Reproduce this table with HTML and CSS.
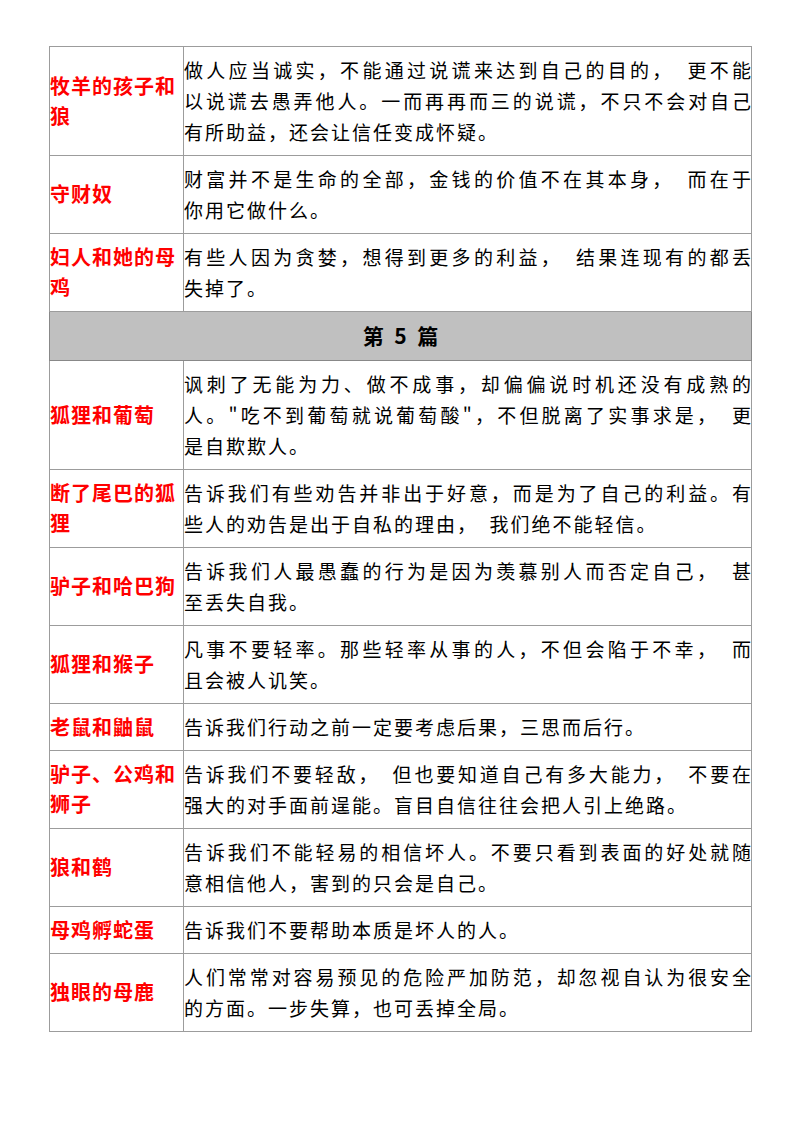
FILE: index.html
```html
<!DOCTYPE html>
<html lang="zh-CN">
<head>
<meta charset="utf-8">
<title>寓言启示</title>
<link rel="stylesheet" href="styles.css">
</head>
<body>
<table class="fables">
  <colgroup><col class="c-name"><col class="c-text"></colgroup>
  <tbody>
    <tr>
      <td class="name">牧羊的孩子和狼</td>
      <td class="text"><span class="ln">做人应当诚实，不能通过说谎来达到自己的目的，&ensp;更不能</span><span class="ln">以说谎去愚弄他人。一而再再而三的说谎，不只不会对自己</span><span class="ln end">有所助益，还会让信任变成怀疑。</span></td>
    </tr>
    <tr>
      <td class="name">守财奴</td>
      <td class="text"><span class="ln">财富并不是生命的全部，金钱的价值不在其本身，&ensp;而在于</span><span class="ln end">你用它做什么。</span></td>
    </tr>
    <tr>
      <td class="name">妇人和她的母鸡</td>
      <td class="text"><span class="ln">有些人因为贪婪，想得到更多的利益，&ensp;结果连现有的都丢</span><span class="ln end">失掉了。</span></td>
    </tr>
    <tr class="section">
      <td colspan="2">第&ensp;5&ensp;篇</td>
    </tr>
    <tr>
      <td class="name">狐狸和葡萄</td>
      <td class="text"><span class="ln">讽刺了无能为力、做不成事，却偏偏说时机还没有成熟的</span><span class="ln">人。"吃不到葡萄就说葡萄酸"，不但脱离了实事求是，&ensp;更</span><span class="ln end">是自欺欺人。</span></td>
    </tr>
    <tr>
      <td class="name">断了尾巴的狐狸</td>
      <td class="text"><span class="ln">告诉我们有些劝告并非出于好意，而是为了自己的利益。有</span><span class="ln end">些人的劝告是出于自私的理由，&ensp;我们绝不能轻信。</span></td>
    </tr>
    <tr>
      <td class="name">驴子和哈巴狗</td>
      <td class="text"><span class="ln">告诉我们人最愚蠢的行为是因为羡慕别人而否定自己，&ensp;甚</span><span class="ln end">至丢失自我。</span></td>
    </tr>
    <tr>
      <td class="name">狐狸和猴子</td>
      <td class="text"><span class="ln">凡事不要轻率。那些轻率从事的人，不但会陷于不幸，&ensp;而</span><span class="ln end">且会被人讥笑。</span></td>
    </tr>
    <tr>
      <td class="name">老鼠和鼬鼠</td>
      <td class="text"><span class="ln end">告诉我们行动之前一定要考虑后果，三思而后行。</span></td>
    </tr>
    <tr>
      <td class="name">驴子、公鸡和狮子</td>
      <td class="text"><span class="ln">告诉我们不要轻敌，&ensp;但也要知道自己有多大能力，&ensp;不要在</span><span class="ln end">强大的对手面前逞能。盲目自信往往会把人引上绝路。</span></td>
    </tr>
    <tr>
      <td class="name">狼和鹤</td>
      <td class="text"><span class="ln">告诉我们不能轻易的相信坏人。不要只看到表面的好处就随</span><span class="ln end">意相信他人，害到的只会是自己。</span></td>
    </tr>
    <tr>
      <td class="name">母鸡孵蛇蛋</td>
      <td class="text"><span class="ln end">告诉我们不要帮助本质是坏人的人。</span></td>
    </tr>
    <tr>
      <td class="name">独眼的母鹿</td>
      <td class="text"><span class="ln">人们常常对容易预见的危险严加防范，却忽视自认为很安全</span><span class="ln end">的方面。一步失算，也可丢掉全局。</span></td>
    </tr>
  </tbody>
</table>
</body>
</html>
```

FILE: styles.css
```css
html, body {
  margin: 0;
  padding: 0;
  background: #ffffff;
}

body {
  font-family: "Noto Sans CJK SC", "Noto Sans", sans-serif;
  color: #000000;
}

.fables {
  margin: 46px 0 0 49px;
  width: 702px;
  border-collapse: collapse;
  table-layout: fixed;
}

.c-name { width: 134px; }
.c-text { width: 568px; }

.fables td {
  border: 1px solid #9c9c9c;
  vertical-align: middle;
  padding: 7px 0 8px 0;
}

.name {
  color: #ff0000;
  font-weight: 700;
  font-size: 20px;
  letter-spacing: 1px;
  line-height: 30px;
}

.text {
  font-size: 19px;
  letter-spacing: 2px;
  line-height: 31px;
  padding-right: 1px;
}

.ln {
  display: block;
  white-space: nowrap;
  text-align: justify;
  text-align-last: justify;
  margin-right: -2px;
}

.ln.end {
  text-align: left;
  text-align-last: left;
  margin-right: 0;
}

.section td {
  background: #c0c0c0;
  border-color: #888888;
  text-align: center;
  font-weight: 700;
  font-size: 21px;
  line-height: 31px;
  padding: 8px 0 9px 0;
}
```
